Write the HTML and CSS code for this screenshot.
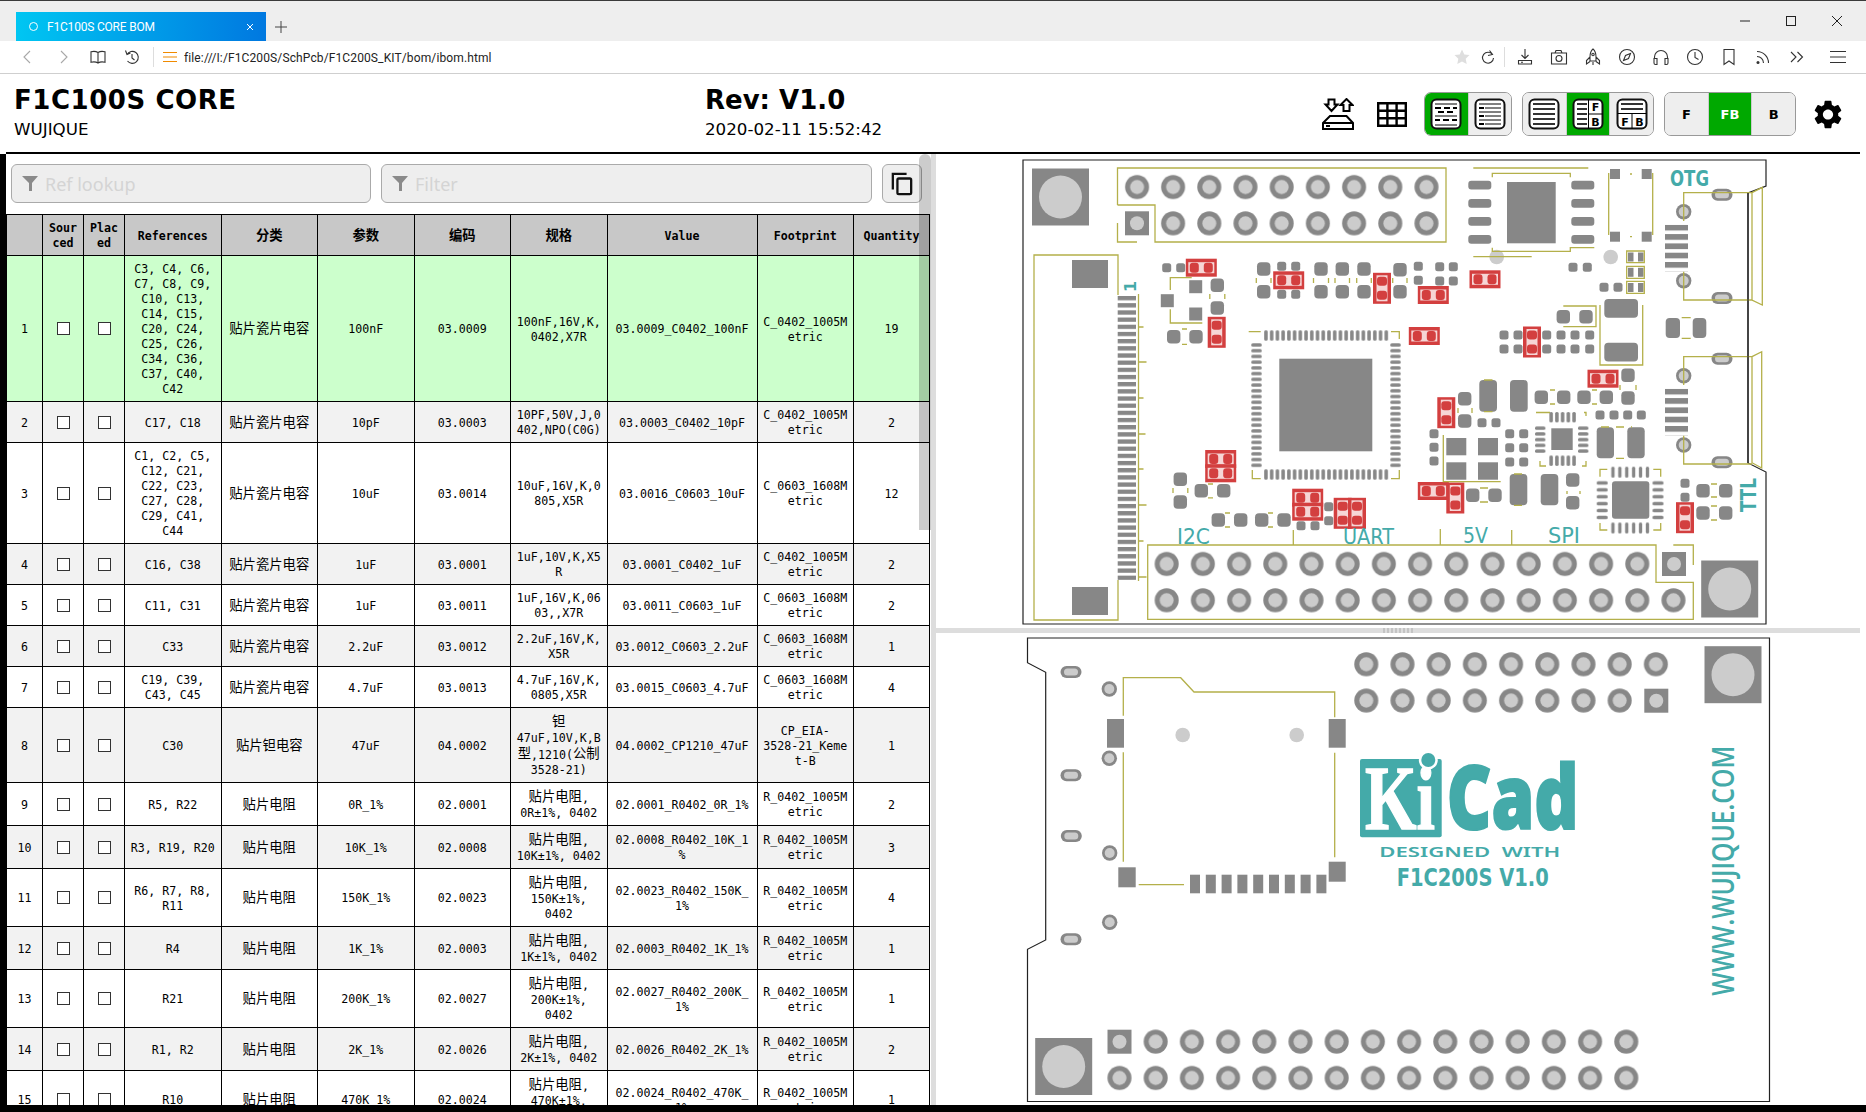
FILE: index.html
```html
<!DOCTYPE html>
<html lang="en">
  <head>
    <meta charset="UTF-8" />
    <meta name="viewport" content="width=device-width, initial-scale=1.0" />
    <title>F1C100S CORE BOM</title>
    <link rel="stylesheet" href="styles.css">
  </head>
  <body>
    <div class="tabstrip">
      <div class="tab">
        <span class="tab-dot"></span>
        <span class="tab-title">F1C100S CORE BOM</span>
        <svg class="tab-x" viewBox="0 0 10 10"><path d="M2 2l6 6M8 2l-6 6" /></svg>
      </div>
      <svg class="tab-new" viewBox="0 0 14 14"><path d="M7 1v12M1 7h12" /></svg>
      <div class="winctl">
        <svg viewBox="0 0 12 12"><path d="M1 6h10" /></svg>
        <svg viewBox="0 0 12 12"><rect x="1.5" y="1.5" width="9" height="9" /></svg>
        <svg viewBox="0 0 12 12"><path d="M1 1l10 10M11 1L1 11" /></svg>
      </div>
    </div>

    <div class="toolbar">
      <button class="tb dim"><svg viewBox="0 0 18 18"><path d="M12 3L6 9l6 6" /></svg></button>
      <button class="tb dim gap"><svg viewBox="0 0 18 18"><path d="M6 3l6 6-6 6" /></svg></button>
      <button class="tb"><svg viewBox="0 0 18 18"><path d="M9 4.5C7 3.3 4 3.3 2 3.8v10.5c2-.5 5-.5 7 .7 2-1.200 5-1.200 7-.7V3.800c-2-.5-5-.5-7 .7zM9 4.500V15" /></svg></button>
      <button class="tb"><svg viewBox="0 0 18 18"><path d="M4 6.500A6 6 0 1 1 4.500 13M2.500 2.500L4 6.500l3.500-1.500M9 6v4l2.500 2" /></svg></button>
      <span class="tb-sep"></span>
      <svg class="addr-icon" viewBox="0 0 14 12"><path d="M0 1.500h14M0 6h14M0 10.500h14" /></svg>
      <span class="addr">file:///I:/F1C200S/SchPcb/F1C200S_KIT/bom/ibom.html</span>
      <span class="tb-star"><svg viewBox="0 0 18 18"><path d="M9 1.500l2.300 4.900 5.200.7-3.800 3.700 1 5.300L9 13.500l-4.700 2.600 1-5.300L1.500 7.100l5.200-.7z" /></svg></span>
      <span class="tb-reload"><svg viewBox="0 0 18 18"><path d="M13.500 6.500A5.500 5.500 0 1 0 14.500 10M10.500 2.500l3 4-4.500 1" /></svg></span>
      <span class="tb-sep tb-sep-right"></span>
      <button class="tb"><svg viewBox="0 0 18 18"><path d="M9 1v9M5.500 7L9 10.500 12.500 7M2.500 12.500h13v3.500h-13zM5 14.300h2" /></svg></button>
      <button class="tb"><svg viewBox="0 0 18 18"><path d="M1.500 5h15v11h-15zM5 5l1-2.500h5l1 2.500" /><circle cx="9" cy="10.500" r="3" /></svg></button>
      <button class="tb"><svg viewBox="0 0 18 18"><path d="M9 1c2.500 2 3 5 3 8v4H6V9c0-3 .5-6 3-8zM6 9l-3.500 3.500V16L6 13.500M12 9l3.500 3.500V16L12 13.500M9 14v3" /><circle cx="9" cy="6.500" r="1.200" /></svg></button>
      <button class="tb"><svg viewBox="0 0 18 18"><circle cx="9" cy="9" r="7.500" /><path d="M12.500 5.500L10.500 10.500 5.500 12.500 7.500 7.500z" /></svg></button>
      <button class="tb"><svg viewBox="0 0 18 18"><path d="M2.500 11V9a6.500 6.500 0 0 1 13 0v2M2 10.500h3v6H3.500A1.500 1.500 0 0 1 2 15zM16 10.500h-3v6h1.500A1.500 1.500 0 0 0 16 15z" /></svg></button>
      <button class="tb"><svg viewBox="0 0 18 18"><circle cx="9" cy="9" r="7.500" /><path d="M9 4v5.500l3.500 2" /></svg></button>
      <button class="tb"><svg viewBox="0 0 18 18"><path d="M4 1.500h10V16.500l-5-3.500-5 3.500z" /></svg></button>
      <button class="tb"><svg viewBox="0 0 18 18"><path d="M3 8.500a6.500 6.500 0 0 1 6.500 6.500M3 3.500A11.500 11.500 0 0 1 14.500 15" /><circle class="solid" cx="4" cy="14.500" r="1.500" /></svg></button>
      <button class="tb"><svg viewBox="0 0 18 18"><path d="M3 4l5 5-5 5M9.500 4l5 5-5 5" /></svg></button>
      <button class="tb tb-menu"><svg viewBox="0 0 18 18"><path d="M1 3.500h16M1 9h16M1 14.500h16" /></svg></button>
    </div>

    <header class="topbar">
      <div class="title-col">
        <div class="title title-main">F1C100S CORE</div>
        <div class="subtitle">WUJIQUE</div>
      </div>
      <div class="rev-col">
        <div class="title">Rev: V1.0</div>
        <div class="subtitle">2020-02-11 15:52:42</div>
      </div>
      <div class="controls">
        <button class="plain-btn">
          <svg class="ico-io" viewBox="0 0 32 32"><path d="M6.500 1.500h6v5h3l-6 6.500-6-6.500h3zM21.500 13V7h-3l6-6 6 6h-3v6zM1 25l7-7h16.500l6.500 7v6H1zM1 25h30M4 28h4" /></svg>
        </button>
        <button class="plain-btn">
          <svg class="ico-grid" viewBox="0 0 30 25"><path d="M1.200 1.200h27.600v22.600H1.200zM10.400 1.200v22.600M19.600 1.200v22.600M1.200 8.700h27.600M1.200 16.300h27.600" /></svg>
        </button>
        <div class="btn-group group-2">
          <button class="on">
            <svg class="ico-doc" viewBox="0 0 32 32">
              <rect x="1.500" y="1.500" width="29" height="29" rx="5" />
              <path class="thin" d="M5 6h22M5 18h22M5 27h22" />
              <path d="M5 10h6M14 10h6M23 10h4M8 14h6M17 14h6M5 22h5M13 22h6M22 22h5" />
            </svg>
          </button>
          <button>
            <svg class="ico-doc" viewBox="0 0 32 32">
              <rect x="1.500" y="1.500" width="29" height="29" rx="5" />
              <path class="thin" d="M5 6h22M11 10h16M5 14h22M11 18h16M5 22h22M11 26h16" />
              <path d="M5 10h5M5 18h5M5 26h5" />
            </svg>
          </button>
        </div>
        <div class="btn-group group-3">
          <button>
            <svg class="ico-doc" viewBox="0 0 32 32">
              <rect x="1.500" y="1.500" width="29" height="29" rx="5" />
              <path class="gray" d="M5 6h22M5 11h22M5 16h22M5 21h22M5 26h22" />
            </svg>
          </button>
          <button class="on">
            <svg class="ico-doc" viewBox="0 0 32 32">
              <rect x="1.500" y="1.500" width="29" height="29" rx="5" />
              <path class="gray" d="M5 6h10M5 11h10M5 16h10M5 21h10M5 26h10" />
              <path class="thin" d="M16.500 1.500v29M16.500 16h14" />
              <text x="23.500" y="13" class="doc-letter">F</text>
              <text x="23.500" y="28" class="doc-letter">B</text>
            </svg>
          </button>
          <button>
            <svg class="ico-doc" viewBox="0 0 32 32">
              <rect x="1.500" y="1.500" width="29" height="29" rx="5" />
              <path class="gray" d="M5 6h22M5 11h22" />
              <path class="thin" d="M1.500 15.500h29M16 15.500v15" />
              <text x="9" y="27.500" class="doc-letter">F</text>
              <text x="23.500" y="27.500" class="doc-letter">B</text>
            </svg>
          </button>
        </div>
        <div class="btn-group group-3">
          <button class="letter">F</button>
          <button class="letter on">FB</button>
          <button class="letter">B</button>
        </div>
        <button class="plain-btn">
          <svg class="ico-gear" viewBox="2.300 1.800 19.400 20.400"><path d="M19.140 12.940c.04-.3.06-.61.06-.94 0-.32-.02-.64-.07-.94l2.030-1.580c.18-.14.23-.41.12-.61l-1.920-3.320c-.12-.22-.37-.29-.59-.22l-2.390.96c-.5-.38-1.030-.7-1.620-.94l-.36-2.540c-.04-.24-.24-.41-.48-.41h-3.840c-.24 0-.43.17-.47.41l-.36 2.540c-.59.24-1.130.57-1.620.94l-2.390-.96c-.22-.08-.47 0-.59.22L2.740 8.870c-.12.21-.08.47.12.61l2.030 1.580c-.05.3-.09.63-.09.94s.02.64.07.94l-2.030 1.580c-.18.14-.23.41-.12.61l1.920 3.320c.12.22.37.29.59.22l2.390-.96c.5.38 1.030.7 1.620.94l.36 2.540c.05.24.24.41.48.41h3.840c.24 0 .44-.17.47-.41l.36-2.540c.59-.24 1.130-.56 1.620-.94l2.390.96c.22.08.47 0 .59-.22l1.920-3.320c.12-.22.07-.47-.12-.61l-2.010-1.580zM12 15.600c-1.980 0-3.600-1.620-3.600-3.600s1.620-3.600 3.600-3.600 3.600 1.620 3.600 3.600-1.620 3.600-3.600 3.600z" /></svg>
        </button>
      </div>
    </header>

    <main class="main">
      <section class="bom-pane">
        <div class="filters">
          <label class="filter filter-ref">
            <svg viewBox="0 0 16 15"><path d="M0 0h16l-6 7v8H7V7z" /></svg>
            <input type="text" placeholder="Ref lookup" />
          </label>
          <label class="filter filter-text">
            <svg viewBox="0 0 16 15"><path d="M0 0h16l-6 7v8H7V7z" /></svg>
            <input type="text" placeholder="Filter" />
          </label>
          <button class="copy-btn">
            <svg viewBox="0 0 24 26"><path d="M2 19V2h15" /><rect x="7" y="7" width="15" height="17" rx="1.500" /></svg>
          </button>
        </div>
        <table class="bom">
          <colgroup>
            <col class="c-no" /><col class="c-chk" /><col class="c-chk" /><col class="c-wide" /><col class="c-wide" />
            <col class="c-wide" /><col class="c-wide" /><col class="c-wide" /><col class="c-val" /><col class="c-wide" /><col class="c-qty" />
          </colgroup>
          <thead>
            <tr>
              <th></th><th>Sourced</th><th>Placed</th><th>References</th><th><span class="zh">分类</span></th><th><span class="zh">参数</span></th>
              <th><span class="zh">编码</span></th><th><span class="zh">规格</span></th><th>Value</th><th>Footprint</th><th>Quantity</th>
            </tr>
          </thead>
          <tbody>
            <tr class="hl">
              <td>1</td><td><input type="checkbox" /></td><td><input type="checkbox" /></td>
              <td>C3, C4, C6, C7, C8, C9, C10, C13, C14, C15, C20, C24, C25, C26, C34, C36, C37, C40, C42</td>
              <td><span class="zh">贴片瓷片电容</span></td><td>100nF</td><td>03.0009</td><td>100nF,16V,K,0402,X7R</td><td>03.0009_C0402_100nF</td><td>C_0402_1005Metric</td><td>19</td>
            </tr>
            <tr>
              <td>2</td><td><input type="checkbox" /></td><td><input type="checkbox" /></td>
              <td>C17, C18</td>
              <td><span class="zh">贴片瓷片电容</span></td><td>10pF</td><td>03.0003</td><td>10PF,50V,J,0402,NPO(C0G)</td><td>03.0003_C0402_10pF</td><td>C_0402_1005Metric</td><td>2</td>
            </tr>
            <tr>
              <td>3</td><td><input type="checkbox" /></td><td><input type="checkbox" /></td>
              <td>C1, C2, C5, C12, C21, C22, C23, C27, C28, C29, C41, C44</td>
              <td><span class="zh">贴片瓷片电容</span></td><td>10uF</td><td>03.0014</td><td>10uF,16V,K,0805,X5R</td><td>03.0016_C0603_10uF</td><td>C_0603_1608Metric</td><td>12</td>
            </tr>
            <tr>
              <td>4</td><td><input type="checkbox" /></td><td><input type="checkbox" /></td>
              <td>C16, C38</td>
              <td><span class="zh">贴片瓷片电容</span></td><td>1uF</td><td>03.0001</td><td>1uF,10V,K,X5R</td><td>03.0001_C0402_1uF</td><td>C_0402_1005Metric</td><td>2</td>
            </tr>
            <tr>
              <td>5</td><td><input type="checkbox" /></td><td><input type="checkbox" /></td>
              <td>C11, C31</td>
              <td><span class="zh">贴片瓷片电容</span></td><td>1uF</td><td>03.0011</td><td>1uF,16V,K,0603,,X7R</td><td>03.0011_C0603_1uF</td><td>C_0603_1608Metric</td><td>2</td>
            </tr>
            <tr>
              <td>6</td><td><input type="checkbox" /></td><td><input type="checkbox" /></td>
              <td>C33</td>
              <td><span class="zh">贴片瓷片电容</span></td><td>2.2uF</td><td>03.0012</td><td>2.2uF,16V,K,X5R</td><td>03.0012_C0603_2.2uF</td><td>C_0603_1608Metric</td><td>1</td>
            </tr>
            <tr>
              <td>7</td><td><input type="checkbox" /></td><td><input type="checkbox" /></td>
              <td>C19, C39, C43, C45</td>
              <td><span class="zh">贴片瓷片电容</span></td><td>4.7uF</td><td>03.0013</td><td>4.7uF,16V,K,0805,X5R</td><td>03.0015_C0603_4.7uF</td><td>C_0603_1608Metric</td><td>4</td>
            </tr>
            <tr>
              <td>8</td><td><input type="checkbox" /></td><td><input type="checkbox" /></td>
              <td>C30</td>
              <td><span class="zh">贴片钽电容</span></td><td>47uF</td><td>04.0002</td><td><span class="zh">钽</span>47uF,10V,K,B<span class="zh">型</span>,1210(<span class="zh">公制</span>3528-21)</td><td>04.0002_CP1210_47uF</td><td>CP_EIA-<br>3528-21_Keme<br>t-B</td><td>1</td>
            </tr>
            <tr>
              <td>9</td><td><input type="checkbox" /></td><td><input type="checkbox" /></td>
              <td>R5, R22</td>
              <td><span class="zh">贴片电阻</span></td><td>0R_1%</td><td>02.0001</td><td><span class="zh">贴片电阻</span>, 0R±1%, 0402</td><td>02.0001_R0402_0R_1%</td><td>R_0402_1005Metric</td><td>2</td>
            </tr>
            <tr>
              <td>10</td><td><input type="checkbox" /></td><td><input type="checkbox" /></td>
              <td>R3, R19, R20</td>
              <td><span class="zh">贴片电阻</span></td><td>10K_1%</td><td>02.0008</td><td><span class="zh">贴片电阻</span>, 10K±1%, 0402</td><td>02.0008_R0402_10K_1%</td><td>R_0402_1005Metric</td><td>3</td>
            </tr>
            <tr>
              <td>11</td><td><input type="checkbox" /></td><td><input type="checkbox" /></td>
              <td>R6, R7, R8, R11</td>
              <td><span class="zh">贴片电阻</span></td><td>150K_1%</td><td>02.0023</td><td><span class="zh">贴片电阻</span>, 150K±1%, 0402</td><td>02.0023_R0402_150K_1%</td><td>R_0402_1005Metric</td><td>4</td>
            </tr>
            <tr>
              <td>12</td><td><input type="checkbox" /></td><td><input type="checkbox" /></td>
              <td>R4</td>
              <td><span class="zh">贴片电阻</span></td><td>1K_1%</td><td>02.0003</td><td><span class="zh">贴片电阻</span>, 1K±1%, 0402</td><td>02.0003_R0402_1K_1%</td><td>R_0402_1005Metric</td><td>1</td>
            </tr>
            <tr>
              <td>13</td><td><input type="checkbox" /></td><td><input type="checkbox" /></td>
              <td>R21</td>
              <td><span class="zh">贴片电阻</span></td><td>200K_1%</td><td>02.0027</td><td><span class="zh">贴片电阻</span>, 200K±1%, 0402</td><td>02.0027_R0402_200K_1%</td><td>R_0402_1005Metric</td><td>1</td>
            </tr>
            <tr>
              <td>14</td><td><input type="checkbox" /></td><td><input type="checkbox" /></td>
              <td>R1, R2</td>
              <td><span class="zh">贴片电阻</span></td><td>2K_1%</td><td>02.0026</td><td><span class="zh">贴片电阻</span>, 2K±1%, 0402</td><td>02.0026_R0402_2K_1%</td><td>R_0402_1005Metric</td><td>2</td>
            </tr>
            <tr>
              <td>15</td><td><input type="checkbox" /></td><td><input type="checkbox" /></td>
              <td>R10</td>
              <td><span class="zh">贴片电阻</span></td><td>470K_1%</td><td>02.0024</td><td><span class="zh">贴片电阻</span>, 470K±1%, 0402</td><td>02.0024_R0402_470K_1%</td><td>R_0402_1005Metric</td><td>1</td>
            </tr>
          </tbody>
        </table>
        <div class="scroll-thumb"></div>
      </section>

      <div class="gutter-v"></div>

      <section class="pcb-pane">
        <!-- front side, viewBox is in window coordinates -->
        <svg class="pcb pcb-front" viewBox="936 154 924 474">
          <defs>
            <pattern id="pin" patternUnits="userSpaceOnUse" width="36.2" height="36.3">
              <circle class="pad" cx="18.1" cy="18.15" r="12" /><circle class="hole" cx="18.1" cy="18.15" r="7" />
            </pattern>
            <pattern id="leadV" patternUnits="userSpaceOnUse" width="5.73" height="10.4">
              <rect class="pad" x="1.100" width="3.500" height="10.4" rx="1.500" />
            </pattern>
            <pattern id="leadH" patternUnits="userSpaceOnUse" width="10.4" height="5.73">
              <rect class="pad" y="1.100" width="10.4" height="3.500" rx="1.500" />
            </pattern>
            <pattern id="qfnV" patternUnits="userSpaceOnUse" width="6.9" height="11">
              <rect class="pad" x="1.800" width="3.300" height="11" rx="1.500" />
            </pattern>
            <pattern id="qfnH" patternUnits="userSpaceOnUse" width="11" height="6.9">
              <rect class="pad" y="1.800" width="11" height="3.300" rx="1.500" />
            </pattern>
            <pattern id="fpc" patternUnits="userSpaceOnUse" width="18.3" height="7.17">
              <rect class="pad" width="18.3" height="4.300" />
            </pattern>
            <pattern id="usb" patternUnits="userSpaceOnUse" width="23" height="9.3">
              <rect class="pad" width="23" height="5.700" />
            </pattern>
            <rect id="s" class="pad" x="-4.500" y="-4.500" width="9" height="9" rx="2.500" />
            <rect id="m" class="pad" x="-6.700" y="-6.700" width="13.400" height="13.400" rx="4" />
            <rect id="q" class="pad" x="-6.500" y="-6.500" width="13" height="13" />
            <g id="oval">
              <rect class="pad" x="-10.500" y="-6" width="21" height="12" rx="6" />
              <rect class="hole" x="-7" y="-3.500" width="14" height="7" rx="3.500" />
            </g>
            <g id="th">
              <circle class="pad" r="7.700" /><circle class="hole" r="5" />
            </g>
            <g id="mount">
              <rect class="pad" x="-28.500" y="-28.500" width="57" height="57" />
              <circle class="hole" r="21.500" />
            </g>
            <g id="rh">
              <rect class="red" x="-15.500" y="-9" width="31" height="18" />
              <rect class="red-in" x="-13" y="-5.500" width="26" height="11" />
              <rect class="red" x="-11.500" y="-5" width="9" height="10" rx="3" />
              <rect class="red" x="2.500" y="-5" width="9" height="10" rx="3" />
            </g>
            <use id="rv" href="#rh" transform="rotate(90)" />
            <g id="sqpin">
              <rect class="pad" x="-12" y="-12" width="24" height="24" />
              <circle class="hole" r="7" />
            </g>
          </defs>

          <path class="edge" d="M1023 160H1766V186L1748 193V463L1766 472V624H1023z" />

          <use href="#mount" x="1060.500" y="197" />
          <use href="#mount" x="1729.700" y="589" />

          <!-- pin headers -->
          <rect transform="translate(1155,168.900)" width="289.600" height="36.300" fill="url(#pin)" />
          <rect transform="translate(1119,168.900)" width="36.200" height="36.300" fill="url(#pin)" />
          <rect transform="translate(1155,205.200)" width="289.600" height="36.300" fill="url(#pin)" />
          <use href="#sqpin" x="1137" y="223.300" />
          <rect transform="translate(1148.600,545.800)" width="506.800" height="36.300" fill="url(#pin)" />
          <use href="#sqpin" x="1674" y="564" />
          <rect transform="translate(1148.600,582.100)" width="543" height="36.300" fill="url(#pin)" />

          <!-- fpc connector -->
          <rect transform="translate(1117.700,296)" width="18.300" height="284" fill="url(#fpc)" />
          <rect class="pad" x="1072" y="260" width="36" height="28" />
          <rect class="pad" x="1072" y="587" width="36" height="28" />

          <!-- cpu -->
          <rect class="pad" x="1279.300" y="358.700" width="93" height="92.600" />
          <rect transform="translate(1263.100,330.300)" width="126.060" height="10.4" fill="url(#leadV)" />
          <rect transform="translate(1263.100,469.300)" width="126.060" height="10.4" fill="url(#leadV)" />
          <rect transform="translate(1251.300,342.100)" width="10.4" height="126.060" fill="url(#leadH)" />
          <rect transform="translate(1390.300,342.100)" width="10.4" height="126.060" fill="url(#leadH)" />

          <!-- flash -->
          <rect class="pad" x="1507" y="182" width="48.700" height="61.300" />
          <rect class="pad" x="1468.300" y="180.700" width="23" height="8.700" rx="3" />
          <rect class="pad" x="1468.300" y="199" width="23" height="8.700" rx="3" />
          <rect class="pad" x="1468.300" y="217" width="23" height="8.700" rx="3" />
          <rect class="pad" x="1468.300" y="235" width="23" height="8.700" rx="3" />
          <rect class="pad" x="1571.300" y="180.700" width="23" height="8.700" rx="3" />
          <rect class="pad" x="1571.300" y="199" width="23" height="8.700" rx="3" />
          <rect class="pad" x="1571.300" y="217" width="23" height="8.700" rx="3" />
          <rect class="pad" x="1571.300" y="235" width="23" height="8.700" rx="3" />
          <circle class="hole" cx="1496.700" cy="257" r="7.300" />
          <circle class="hole" cx="1610.700" cy="257" r="7.300" />

          <!-- crystal and small squares -->
          <rect class="pad" x="1610" y="169" width="10" height="10" />
          <rect class="pad" x="1641.700" y="169" width="10" height="10" />
          <rect class="pad" x="1610" y="231.700" width="10" height="10" />
          <rect class="pad" x="1641.700" y="231.700" width="10" height="10" />
          <rect class="pad" x="1628" y="252.500" width="5.500" height="9" />
          <rect class="pad" x="1638" y="252.500" width="5.500" height="9" />
          <rect class="pad" x="1628" y="267.800" width="5.500" height="9" />
          <rect class="pad" x="1638" y="267.800" width="5.500" height="9" />
          <rect class="pad" x="1628" y="283" width="5.500" height="9" />
          <rect class="pad" x="1638" y="283" width="5.500" height="9" />

          <!-- usb -->
          <rect transform="translate(1665,224.800)" width="23" height="46.500" fill="url(#usb)" />
          <rect transform="translate(1665,388.800)" width="23" height="46.500" fill="url(#usb)" />
          <use href="#oval" x="1722" y="194.700" /><use href="#oval" x="1722" y="298" />
          <use href="#oval" x="1722" y="358.700" /><use href="#oval" x="1722" y="462.300" />
          <use href="#th" x="1683.700" y="211.700" /><use href="#th" x="1683.700" y="280.700" />
          <use href="#th" x="1683.700" y="375.700" /><use href="#th" x="1683.700" y="445" />

          <!-- larger parts -->
          <rect class="pad" x="1604.300" y="299" width="33.700" height="18.700" rx="4" />
          <rect class="pad" x="1604.300" y="342.700" width="33.700" height="18.700" rx="4" />
          <rect class="pad" x="1665.700" y="318" width="14.300" height="20" rx="4" />
          <rect class="pad" x="1692.700" y="318" width="13.600" height="20" rx="4" />
          <rect class="pad" x="1479.300" y="380" width="17.700" height="31.700" rx="4" />
          <rect class="pad" x="1510" y="380" width="17.700" height="31.700" rx="4" />
          <rect class="pad" x="1596.700" y="427.300" width="17.300" height="31" rx="4" />
          <rect class="pad" x="1627.300" y="427.300" width="17.400" height="31" rx="4" />
          <rect class="pad" x="1509.700" y="474" width="17.600" height="31.300" rx="4" />
          <rect class="pad" x="1540.700" y="474" width="17.600" height="31.300" rx="4" />

          <!-- qfn -->
          <rect class="pad" x="1551.300" y="428.300" width="21.400" height="21.700" />
          <rect transform="translate(1548.300,412)" width="28.650" height="10.4" fill="url(#leadV)" />
          <rect transform="translate(1548.300,455.500)" width="28.650" height="10.4" fill="url(#leadV)" />
          <rect transform="translate(1535,425.300)" width="10.4" height="28.650" fill="url(#leadH)" />
          <rect transform="translate(1578,425.300)" width="10.4" height="28.650" fill="url(#leadH)" />
          <rect class="pad" x="1612" y="481.300" width="37.300" height="37.400" rx="3" />
          <rect transform="translate(1609.500,466.700)" width="41.400" height="11" fill="url(#qfnV)" />
          <rect transform="translate(1609.500,522.500)" width="41.400" height="11" fill="url(#qfnV)" />
          <rect transform="translate(1596.700,479.500)" width="11" height="41.400" fill="url(#qfnH)" />
          <rect transform="translate(1652.500,479.500)" width="11" height="41.400" fill="url(#qfnH)" />

          <!-- square pads -->
          <use href="#q" x="1195.700" y="286.700" /><use href="#q" x="1167.300" y="300.700" /><use href="#q" x="1195.700" y="314" />
          <rect class="pad" x="1446.300" y="438" width="20" height="17.300" />
          <rect class="pad" x="1478" y="438" width="20" height="17.300" />
          <rect class="pad" x="1446.300" y="462.300" width="20" height="17.400" />
          <rect class="pad" x="1478" y="462.300" width="20" height="17.400" />

          <!-- 0603 pads -->
          <use href="#m" x="1263.700" y="269" /><use href="#m" x="1263.700" y="291.700" />
          <use href="#m" x="1321" y="269" /><use href="#m" x="1321" y="291.700" />
          <use href="#m" x="1342.300" y="269" /><use href="#m" x="1342.300" y="291.700" />
          <use href="#m" x="1364" y="269" /><use href="#m" x="1364" y="291.700" />
          <use href="#m" x="1400" y="269.700" /><use href="#m" x="1400" y="291.700" />
          <use href="#m" x="1217.300" y="285.300" /><use href="#m" x="1217.300" y="308" />
          <use href="#m" x="1173.700" y="336.700" /><use href="#m" x="1196" y="336.700" />
          <use href="#m" x="1180.300" y="479.300" /><use href="#m" x="1180.300" y="502" />
          <use href="#m" x="1201.300" y="490.700" /><use href="#m" x="1223.700" y="490.700" />
          <use href="#m" x="1218.300" y="520" /><use href="#m" x="1240.700" y="520" />
          <use href="#m" x="1261.700" y="520" /><use href="#m" x="1284" y="520" />
          <use href="#m" x="1563.300" y="316.700" /><use href="#m" x="1586" y="316.700" />
          <use href="#m" x="1628" y="375.300" /><use href="#m" x="1628" y="398" />
          <use href="#m" x="1541.300" y="397.300" /><use href="#m" x="1563.700" y="397.300" />
          <use href="#m" x="1584" y="397.300" /><use href="#m" x="1606.300" y="397.300" />
          <use href="#m" x="1464.700" y="398.700" /><use href="#m" x="1464.700" y="421" />
          <use href="#m" x="1472.700" y="495.300" /><use href="#m" x="1495" y="495.300" />
          <use href="#m" x="1572.700" y="480" /><use href="#m" x="1572.700" y="502.700" />
          <use href="#m" x="1703" y="490.700" /><use href="#m" x="1725.700" y="490.700" />
          <use href="#m" x="1703" y="513" /><use href="#m" x="1725.700" y="513" />

          <!-- 0402 pads -->
          <use href="#s" x="1166.700" y="267.700" /><use href="#s" x="1180.700" y="267.700" />
          <use href="#s" x="1281.700" y="266.300" /><use href="#s" x="1295.700" y="266.300" />
          <use href="#s" x="1281.700" y="294.300" /><use href="#s" x="1295.700" y="294.300" />
          <use href="#s" x="1418.300" y="266.300" /><use href="#s" x="1418.300" y="280.300" />
          <use href="#s" x="1439.700" y="266.700" /><use href="#s" x="1453.300" y="266.700" />
          <use href="#s" x="1439.700" y="281" /><use href="#s" x="1453.300" y="281" />
          <use href="#s" x="1573" y="267.300" /><use href="#s" x="1587.300" y="267.300" />
          <use href="#s" x="1604" y="287.300" /><use href="#s" x="1618" y="287.300" />
          <use href="#s" x="1504" y="335" /><use href="#s" x="1518" y="335" />
          <use href="#s" x="1504" y="349" /><use href="#s" x="1518" y="349" />
          <use href="#s" x="1546.700" y="335" /><use href="#s" x="1561" y="335" /><use href="#s" x="1575" y="335" /><use href="#s" x="1589.700" y="335" />
          <use href="#s" x="1546.700" y="349" /><use href="#s" x="1561" y="349" /><use href="#s" x="1575" y="349" /><use href="#s" x="1589.700" y="349" />
          <use href="#s" x="1482" y="422.700" /><use href="#s" x="1496" y="422.700" />
          <use href="#s" x="1600" y="415" /><use href="#s" x="1614" y="415" /><use href="#s" x="1627.700" y="415" /><use href="#s" x="1641.300" y="415" />
          <use href="#s" x="1434" y="433.700" /><use href="#s" x="1434" y="447.300" /><use href="#s" x="1434" y="461" />
          <use href="#s" x="1509.700" y="433.700" /><use href="#s" x="1523.700" y="433.700" />
          <use href="#s" x="1509.700" y="447.700" /><use href="#s" x="1523.700" y="447.700" />
          <use href="#s" x="1509.700" y="462" /><use href="#s" x="1523.700" y="462" />
          <use href="#s" x="1328.700" y="506.700" /><use href="#s" x="1328.700" y="520.700" />
          <use href="#s" x="1301" y="525.700" /><use href="#s" x="1315" y="525.700" />
          <use href="#s" x="1685" y="483.300" /><use href="#s" x="1685" y="497.300" />

          <!-- selected parts -->
          <use href="#rh" x="1201.300" y="267.700" />
          <use href="#rh" x="1288.700" y="280.300" />
          <use href="#rv" x="1382" y="288.300" />
          <use href="#rv" x="1216.700" y="332.300" />
          <use href="#rh" x="1220.700" y="459" />
          <use href="#rh" x="1220.700" y="473.300" />
          <use href="#rh" x="1433.300" y="295" />
          <use href="#rh" x="1485" y="279.300" />
          <use href="#rh" x="1424.300" y="336" />
          <use href="#rv" x="1532" y="342" />
          <use href="#rh" x="1603" y="378.700" />
          <use href="#rv" x="1446.300" y="412.700" />
          <use href="#rh" x="1307.700" y="497.700" />
          <use href="#rh" x="1307.700" y="511.700" />
          <use href="#rv" x="1342.700" y="513.300" />
          <use href="#rv" x="1357" y="513.300" />
          <use href="#rh" x="1433.300" y="491" />
          <use href="#rv" x="1455.300" y="498" />
          <use href="#rv" x="1685" y="517.700" />

          <!-- silkscreen -->
          <path class="silk" d="M1117.500 205V168H1446V242H1155V205H1117.500M1117.500 223V242H1137
            M1118 295V255H1034V620H1118V580M1138.500 294V581M1138.500 327h5M1138.500 362h8M1138.500 398h5M1138.500 434h7M1138.500 469h5M1138.500 505h8M1138.500 541h5M1138.500 577h8
            M1191.700 277.700H1170.300V290M1170.300 309.300V323H1202.300
            M1248.700 331.700H1260.700M1391 331.700H1399.300V339M1252.300 470V478.700H1260.700M1391 478.700H1399.300V470
            M1256.300 278v5M1271 278v5M1313.500 278v5M1328.500 278v5M1335 278v5M1349.500 278v5M1356.700 278v5M1371.300 278v5M1392.700 278v5M1407 278v5
            M1209.800 294v5M1224.800 294v5M1182 329h5M1182 344.300h5M1173 488v5M1187.800 488v5M1208 484h5M1208 497.800h5M1225 513h5M1225 527h5M1268 513h5M1268 527h5
            M1147.700 545H1656V582.300H1693.300V619.300H1147.700zM1673.300 545H1693.300V565M1293.300 530V545M1440.300 529V545M1511.700 530V545
            M1473.300 168H1588.300M1492.300 177.300V173.300H1570.300V177.300M1492.300 247.700V251.300H1570.300V247.700H1594.300M1473.300 256.700H1531.700
            M1608.700 173V235M1652.700 173V235M1630 174h2M1630 236.700h2
            M1626.700 251h17.600v11.700h-17.600zM1626.700 266.300h17.600v12h-17.600zM1626.700 281.300h17.600v12h-17.600z
            M1683.700 221V192.700H1752M1683.700 271.700V300H1752M1752 192.700L1762.300 187.300V305L1752 300V192.700
            M1683.700 385V356.700H1752M1683.700 435.700V464H1752M1752 356.700L1761.700 351.700V468L1752 462.700V356.700
            M1563.300 306H1596V326.700H1563.300M1600 305V365H1642.700V305M1681.700 317.700h9M1681.700 338.300h9
            M1484 380h8.500M1484 411.700h8.500M1617 372v0M1620 385v5M1636 385v5M1550 390h5M1550 404h5M1592 390h5M1592 404h5
            M1458 408v5M1472 408v5M1601 427h8M1632 427h-1M1616 427h8M1616 458.300h8
            M1443.300 435V481.700H1500.700M1550 412.500H1536M1584 412.500H1586V416M1540 461V466H1546M1582 466H1586V461
            M1600 476.700V469.300H1607.300M1653.300 469.300H1660.700V476.700M1600 523V530H1607.300M1653.300 530H1660.700V523
            M1514 474h8M1514 505.300h8M1567 491v3M1580 491v3M1480 488h8M1480 502h8M1711 484h6M1711 497h6M1711 506h6M1711 520h6" />

          <path class="edge-top" d="M1748 193V463" />

          <text class="silk-text" x="1177" y="544" textLength="33" lengthAdjust="spacingAndGlyphs">I2C</text>
          <text class="silk-text" x="1343" y="544" textLength="51" lengthAdjust="spacingAndGlyphs">UART</text>
          <text class="silk-text" x="1463" y="543" textLength="25" lengthAdjust="spacingAndGlyphs">5V</text>
          <text class="silk-text" x="1548" y="543" textLength="32" lengthAdjust="spacingAndGlyphs">SPI</text>
          <text class="silk-text silk-bold" x="1670" y="186" textLength="39" lengthAdjust="spacingAndGlyphs">OTG</text>
          <text class="silk-text silk-bold" transform="translate(1756,512) rotate(-90)" textLength="34" lengthAdjust="spacingAndGlyphs">TTL</text>
          <text class="silk-text silk-small" transform="translate(1136,292) rotate(-90)">1</text>
        </svg>

        <div class="gutter-h"><span class="grip"></span></div>

        <!-- back side -->
        <svg class="pcb pcb-back" viewBox="936 633 924 472">
          <path class="edge" d="M1027.500 638H1769.500V1101.500H1027.500V949.300L1045.700 940V672.300L1027.500 662.700z" />

          <use href="#mount" x="1733" y="674.700" />
          <use href="#mount" x="1063.700" y="1066.500" />

          <rect transform="translate(1348.200,646.100)" width="325.800" height="36.300" fill="url(#pin)" />
          <rect transform="translate(1348.200,682.400)" width="289.600" height="36.300" fill="url(#pin)" />
          <use href="#sqpin" x="1656.300" y="700.700" />

          <use href="#sqpin" x="1119.500" y="1041.700" />
          <rect transform="translate(1137.600,1023.500)" width="506.800" height="36.300" fill="url(#pin)" />
          <rect transform="translate(1101.400,1059.800)" width="543" height="36.300" fill="url(#pin)" />

          <use href="#oval" x="1071" y="672" /><use href="#oval" x="1071" y="775.300" />
          <use href="#oval" x="1071.300" y="836" /><use href="#oval" x="1071" y="939.300" />
          <use href="#th" x="1109.300" y="689" /><use href="#th" x="1109.300" y="758.300" />
          <use href="#th" x="1109.700" y="853" /><use href="#th" x="1109.700" y="922.300" />

          <path class="silk" d="M1123.300 715.700V677.700H1180.700L1194 692H1334.700V717.300M1123.300 752.300V861.700M1334.700 752.700V857.300M1138.700 884.700H1184" />

          <rect class="pad" x="1107" y="719" width="17" height="28.700" />
          <rect class="pad" x="1328.700" y="719" width="17" height="28.700" />
          <rect class="pad" x="1118.300" y="867.300" width="17.400" height="20" />
          <rect class="pad" x="1328.700" y="861.700" width="17" height="20" />
          <rect class="pad" x="1190" y="874.700" width="10" height="18.600" />
          <rect class="pad" x="1205.800" y="874.700" width="10" height="18.600" />
          <rect class="pad" x="1221.600" y="874.700" width="10" height="18.600" />
          <rect class="pad" x="1237.400" y="874.700" width="10" height="18.600" />
          <rect class="pad" x="1253.200" y="874.700" width="10" height="18.600" />
          <rect class="pad" x="1269" y="874.700" width="10" height="18.600" />
          <rect class="pad" x="1284.800" y="874.700" width="10" height="18.600" />
          <rect class="pad" x="1300.600" y="874.700" width="10" height="18.600" />
          <rect class="pad" x="1316.400" y="874.700" width="10" height="18.600" />
          <circle class="hole" cx="1182.700" cy="735" r="7.300" />
          <circle class="hole" cx="1296.700" cy="735" r="7.300" />

          <!-- logo -->
          <rect class="logo-bg" x="1360" y="759" width="81.700" height="78.300" rx="2" />
          <text class="logo-ki" x="1365" y="829" textLength="70" lengthAdjust="spacingAndGlyphs">Ki</text>
          <circle class="logo-ring" cx="1428.300" cy="760" r="9.500" />
          <circle class="logo-dot" cx="1428.300" cy="760" r="7" />
          <text class="logo-cad" x="1446.700" y="829" textLength="132" lengthAdjust="spacingAndGlyphs">Cad</text>
          <text class="logo-sub" x="1379.300" y="856.700" textLength="181" lengthAdjust="spacingAndGlyphs">DESIGNED  WITH</text>
          <text class="logo-rev" x="1396.700" y="885.700" textLength="152" lengthAdjust="spacingAndGlyphs">F1C200S V1.0</text>
          <text class="logo-url" transform="translate(1734,995.700) rotate(-90)" textLength="250" lengthAdjust="spacingAndGlyphs">WWW.WUJIQUE.COM</text>
        </svg>
      </section>
    </main>
    <div class="window-edge"></div>
  </body>
</html>
```

FILE: styles.css
```css
:root {
  --chrome-bg: #eeeeee;
  --btn-bg: #eeeeee;
  --btn-on: #00a900;
  --pad: #878787;
  --hole: #cccccc;
  --silk: #b4b04a;
  --teal: #44aaa9;
  --red: #d33f3f;
  --mono: "DejaVu Sans Mono", "Noto Sans CJK SC", monospace;
}

* {
  box-sizing: border-box;
}

html,
body {
  height: 100%;
}

body {
  margin: 0;
  display: flex;
  flex-direction: column;
  overflow: hidden;
  background-color: #fff;
  font-family: "DejaVu Sans", sans-serif;
  color: #000;
}

button {
  padding: 0;
  border: none;
  background: none;
}

/* browser chrome */
.tabstrip {
  flex: none;
  height: 41px;
  padding-top: 11px;
  display: flex;
  align-items: center;
  background-color: var(--chrome-bg);
  border-top: 1px solid #3a3a3a;
}

.tab {
  width: 250px;
  height: 30px;
  margin-left: 16px;
  padding-left: 13px;
  display: flex;
  align-items: center;
  background: linear-gradient(90deg, #00c6f2, #0078e0);
  color: #fff;
  font: 12px Roboto, sans-serif;
}

.tab-dot {
  width: 9px;
  height: 9px;
  border: 1px solid #fff;
  border-radius: 50%;
}

.tab-title {
  margin-left: 9px;
  flex: 1;
  letter-spacing: -0.2px;
}

.tab-x {
  width: 10px;
  height: 10px;
  margin-right: 11px;
  fill: none;
  stroke: #fff;
}

.tab-new {
  width: 14px;
  height: 14px;
  margin-left: 8px;
  fill: none;
  stroke: #444;
}

.winctl {
  margin-left: auto;
  margin-right: 6px;
  margin-top: -11px;
  display: flex;
}

.winctl svg {
  width: 12px;
  height: 12px;
  margin: 0 17px;
  fill: none;
  stroke: #222;
}

.toolbar {
  flex: none;
  height: 33px;
  padding-left: 10px;
  display: flex;
  align-items: center;
  background-color: #fff;
  border-bottom: 1px solid #cfcfcf;
}

.toolbar svg {
  width: 18px;
  height: 18px;
  fill: none;
  stroke: #333;
  stroke-width: 1.100;
}

.tb {
  width: 34px;
  height: 32px;
  display: flex;
  align-items: center;
  justify-content: center;
}

.tb.dim svg {
  stroke: #a8a8a8;
}

.tb.gap {
  margin-left: 3px;
}

.tb .solid {
  fill: #333;
  stroke: none;
}

.tb-sep {
  width: 1px;
  height: 20px;
  margin-left: 4px;
  background-color: #ddd;
}

.addr-icon.addr-icon {
  width: 14px;
  height: 12px;
  margin-left: 9px;
  stroke: #f08a00;
}

.addr {
  margin-left: 7px;
  padding-top: 1px;
  font: 12px Roboto, sans-serif;
  letter-spacing: 0.12px;
  color: #222;
}

.tb-star {
  margin-left: auto;
  width: 26px;
  display: flex;
  justify-content: center;
}

.tb-star svg {
  fill: #dedede;
  stroke: none;
}

.tb-reload {
  width: 26px;
  display: flex;
  justify-content: center;
}

.tb-sep-right {
  margin-right: 3px;
  margin-left: 3px;
}

.tb-menu {
  margin-left: 7px;
  margin-right: 11px;
}

/* page header */
.topbar {
  flex: none;
  height: 80px;
  margin: 0 6px;
  padding-top: 18px;
  display: flex;
  background-color: #fff;
  border-bottom: 2px solid #000;
}

.title-col {
  width: 699px;
  padding-left: 8px;
}

.title {
  margin-top: -9px;
  font-size: 26px;
  line-height: 34px;
  font-weight: bold;
}

.title-main {
  letter-spacing: 0.55px;
}

.subtitle {
  margin-top: 2px;
  font-size: 16.700px;
  line-height: 20px;
}

.controls {
  margin-left: auto;
  margin-right: 10px;
  display: flex;
  gap: 10px;
}

.plain-btn {
  width: 44px;
  height: 44px;
  display: flex;
  align-items: center;
  justify-content: center;
}

.ico-io {
  width: 32px;
  height: 32px;
  fill: none;
  stroke: #000;
  stroke-width: 2;
}

.ico-grid {
  width: 30px;
  height: 25px;
  fill: none;
  stroke: #000;
  stroke-width: 2.400;
}

.ico-gear {
  width: 28px;
  height: 29px;
  fill: #000;
}

.btn-group {
  height: 44px;
  display: flex;
  overflow: hidden;
  border: 1px solid #999;
  border-radius: 7px;
}

.group-2 {
  width: 88px;
}

.group-3 {
  width: 132px;
}

.btn-group button {
  flex: 1;
  min-width: 0;
  display: flex;
  align-items: center;
  justify-content: center;
  background-color: var(--btn-bg);
  border-left: 1px solid #ccc;
}

.btn-group button:first-child {
  border-left: none;
}

.btn-group button.on {
  background-color: var(--btn-on);
  color: #fff;
}

.btn-group .letter {
  font: bold 13px "DejaVu Sans", sans-serif;
}

.ico-doc {
  width: 32px;
  height: 32px;
}

.ico-doc rect {
  fill: #fff;
  stroke: #111;
  stroke-width: 2;
}

.ico-doc path {
  fill: none;
  stroke: #000;
  stroke-width: 2;
}

.ico-doc path.thin {
  stroke-width: 1;
}

.ico-doc path.gray {
  stroke: #333;
  stroke-width: 1.800;
}

.doc-letter {
  font: bold 11px "DejaVu Sans", sans-serif;
  text-anchor: middle;
}

/* main area */
.main {
  flex: 1;
  min-height: 0;
  margin-right: 6px;
  display: flex;
  border-left: 6px solid #000;
}

.window-edge {
  flex: none;
  height: 7px;
  background-color: #000;
}

.bom-pane {
  position: relative;
  flex: none;
  width: 925px;
  overflow: hidden;
}

.filters {
  height: 60px;
  padding: 10px 0 0 5px;
  display: flex;
  gap: 10px;
}

.filter {
  height: 39px;
  padding-left: 10px;
  display: flex;
  align-items: center;
  gap: 5px;
  background-color: #eee;
  border: 1px solid #aaa;
  border-radius: 6px;
}

.filter svg {
  flex: none;
  width: 16px;
  height: 15px;
  fill: #8a8a8a;
}

.filter input {
  flex: 1;
  min-width: 0;
  padding: 0 2px;
  border: none;
  outline: none;
  background: none;
  font: 18px "Noto Sans", sans-serif;
}

.filter input::placeholder {
  color: #d4d4d4;
  opacity: 1;
}

.filter-ref {
  width: 360px;
}

.filter-text {
  width: 491px;
}

.copy-btn {
  width: 40px;
  height: 39px;
  display: flex;
  align-items: center;
  justify-content: center;
  background-color: #eee;
  border: 1px solid #aaa;
  border-radius: 6px;
}

.copy-btn svg {
  width: 22px;
  height: 24px;
  fill: none;
  stroke: #111;
  stroke-width: 2.500;
}

.scroll-thumb {
  position: absolute;
  top: 0;
  right: 0;
  width: 12px;
  height: 376px;
  background-color: rgba(0, 0, 0, 0.2);
  border-radius: 6px 6px 0 0;
}

.gutter-v {
  flex: none;
  width: 5px;
  background-color: #ddd;
}

/* bom table */
.bom {
  width: 924px;
  table-layout: fixed;
  border-collapse: collapse;
  font-family: var(--mono);
  font-size: 11.620px;
  line-height: 15px;
}

.c-no {
  width: 36px;
}

.c-chk {
  width: 41px;
}

.c-wide {
  width: 96.500px;
}

.c-val {
  width: 150px;
}

.c-qty {
  width: 76px;
}

.bom th,
.bom td {
  padding: 6px 5px 4px;
  text-align: center;
  vertical-align: middle;
  border: 1px solid #000;
  overflow-wrap: anywhere;
}

.bom th {
  background-color: #c8c8c8;
}

.bom th:last-child {
  overflow-wrap: normal;
}

.bom tbody tr:nth-child(even) {
  background-color: #f2f2f2;
}

.bom tbody tr.hl {
  background-color: #ccffcc;
}

.zh {
  font-family: "Noto Sans CJK SC", sans-serif;
  font-size: 13.330px;
  line-height: 13.500px;
  vertical-align: 1px;
}

.bom input[type="checkbox"] {
  appearance: none;
  display: block;
  width: 13px;
  height: 13px;
  margin: -1px auto 1px;
  background-color: #fff;
  border: 1px solid #333;
}

/* pcb canvases */
.pcb-pane {
  flex: 1;
  min-width: 0;
  display: flex;
  flex-direction: column;
}

.pcb {
  display: block;
  width: 924px;
  flex: none;
}

.pcb-front {
  height: 474px;
}

.pcb-back {
  height: 472px;
}

.gutter-h {
  flex: none;
  height: 5px;
  display: flex;
  justify-content: center;
  background-color: #ddd;
}

.grip {
  width: 30px;
  background-image: repeating-linear-gradient(90deg, #c4c4c4 0 2px, transparent 2px 4px);
}

.pad {
  fill: var(--pad);
}

.hole {
  fill: var(--hole);
}

.red {
  fill: var(--red);
}

.red-in {
  fill: #f6d6d6;
}

.edge {
  fill: #fff;
  stroke: #222;
  stroke-width: 1.200;
}

.edge-top {
  fill: none;
  stroke: #222;
  stroke-width: 1.200;
}

.silk {
  fill: none;
  stroke: var(--silk);
  stroke-width: 1.300;
}

.silk-text {
  fill: var(--teal);
  font: 22px "DejaVu Sans", sans-serif;
}

.silk-bold {
  font-weight: bold;
}

.silk-small {
  font-size: 16px;
  font-weight: bold;
}

.logo-bg,
.logo-dot {
  fill: var(--teal);
}

.logo-ring {
  fill: #fff;
}

.logo-ki {
  fill: #fff;
  stroke: #fff;
  stroke-width: 1.500;
  font: bold 92px "Liberation Serif", serif;
}

.logo-cad {
  fill: var(--teal);
  stroke: var(--teal);
  stroke-width: 2;
  font: 800 88px "Open Sans", sans-serif;
}

.logo-sub {
  fill: var(--teal);
  font: 600 14px "Noto Sans", sans-serif;
  white-space: pre;
}

.logo-rev {
  fill: var(--teal);
  font: bold 25px "DejaVu Sans", sans-serif;
}

.logo-url {
  fill: var(--teal);
  font: 600 30px "Open Sans", sans-serif;
}
```
